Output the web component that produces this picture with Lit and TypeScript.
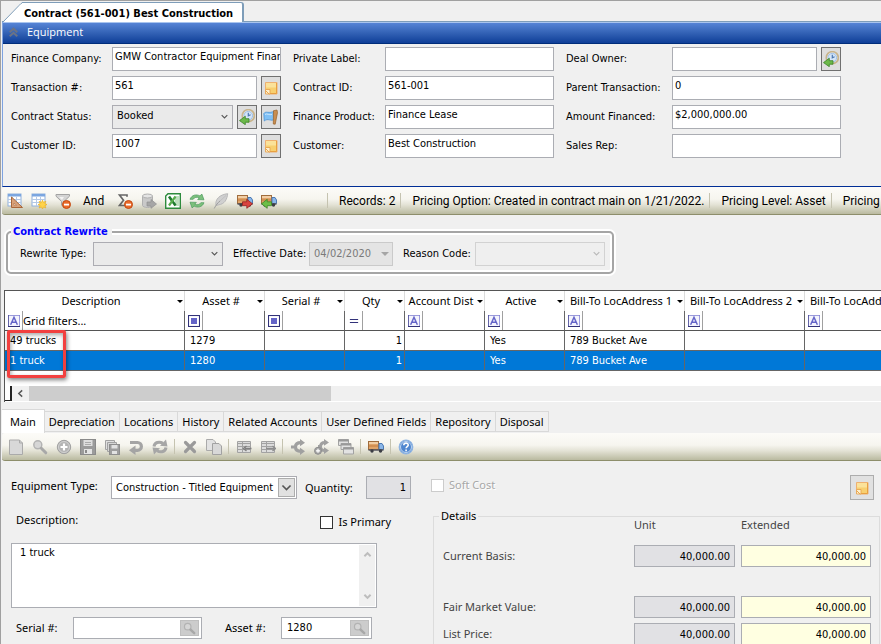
import { LitElement, html, css, svg, nothing, TemplateResult, SVGTemplateResult } from "lit";
import { customElement, property } from "lit/decorators.js";
import { classMap } from "lit/directives/class-map.js";

/* ---------- icons, all drawn on a 16 x 16 field ---------- */

const sheet = svg`
  <rect x="1" y="1" width="13" height="12" fill="#fff" stroke="#8fb0dc"/>
  <rect x="1" y="1" width="13" height="2.500" fill="#7ba6e0"/>
  <path d="M1 6.500h13M1 9.500h13M5.500 4v9M9.500 4v9" stroke="#b4c9e6" fill="none"/>`;

const minusBadge = svg`
  <circle cx="11.5" cy="11.5" r="4" fill="#ea6a2a" stroke="#c24a12"/>
  <rect x="9" y="10.7" width="5" height="1.8" fill="#fff"/>`;

const lorry = svg`
  <rect x="0.5" y="2.5" width="10" height="8" fill="#e0a468" stroke="#a06c3c"/>
  <path d="M1 4h9" stroke="#f8dcb8" stroke-width="1.4"/>
  <path d="M1 7h9" stroke="#c47a3c"/>
  <path d="M11 4.5h3l1.5 2.5v3.500H11z" fill="#8ab6e8" stroke="#4c7ab4"/>
  <path d="M0.500 11h15" stroke="#55555c" stroke-width="1.6"/>
  <circle cx="4" cy="12" r="1.7" fill="#3c3d44"/><circle cx="12.500" cy="12" r="1.7" fill="#3c3d44"/>`;

const grey = "#a2a2a2";
const greyTable = svg`
  <path d="M1.500 2.500h13v11h-13z" fill="#dcdcdc" stroke="${grey}"/>
  <path d="M2 4.500h12M2 7.500h12M2 10.500h12M6.500 3v10" stroke="${grey}"/>`;

const icons: Record<string, SVGTemplateResult> = {
  design: svg`${sheet}<path d="M4.500 4v10.500h11z" fill="#d9a27a" stroke="#a9673b"/><path d="M7 10v2.200h2.500z" fill="#fff" stroke="#a9673b" stroke-width=".6"/>`,
  layoutNew: svg`${sheet}<path d="M11.500 7l1 2.300 2.400-1-1 2.300 2.100 1-2.100 1 1 2.400-2.400-1-1 2-1-2-2.400 1 1-2.400-2.100-1 2.100-1-1-2.300 2.400 1z" fill="#ffd34a" stroke="#e9ac1c" stroke-width=".6"/>`,
  filterOff: svg`<path d="M1 1.500h13.500v1.700L9 8.500V14l-2.500-1.800V8.500L1 3.200z" fill="#d4d4d4" stroke="#a3a3a3"/><path d="M4 4h5l-2 3z" fill="#f3f3f3"/>${minusBadge}`,
  sumOff: svg`<path d="M10 3.700V2H2.500l4 5.200-4 5.300H8" fill="none" stroke="#666" stroke-width="1.700"/>${minusBadge}`,
  dbExport: svg`<path d="M1.500 3v9.500c0 1 2.500 2 5 2s5-1 5-2V3z" fill="#c9c9c9" stroke="#b0b0b0"/><ellipse cx="6.500" cy="3" rx="5" ry="2" fill="#e4e4e4" stroke="#b0b0b0"/><path d="M6 9h4V6.500l5.500 4.500-5.500 4.300V13H6z" fill="#a6a6a6" stroke="#8f8f8f" stroke-width=".7"/>`,
  excel: svg`<path d="M3 .7h12.300v14.600H.7V3z" fill="#fff" stroke="#2e8b3d" stroke-width="1.400"/><rect x="10" y="3" width="4" height="10" fill="#bfe0bf"/><path d="M4 3.500l6.500 9" stroke="#1f7a2e" stroke-width="2.600"/><path d="M10.500 3.500L4 12.500" stroke="#58ab4c" stroke-width="2.200"/>`,
  refresh: svg`<path d="M1 6.300C2.500 2 7.500 .8 11 3L12.800 1l2.200 5.800-6.300-.2 1.500-1.700C8 3.700 5.300 4.200 4.200 6.300z" fill="#7cc07c" stroke="#4a9a5c" stroke-width=".7"/><path d="M15 9.700C13.500 14 8.500 15.200 5 13L3.200 15 1 9.200l6.300.2-1.500 1.700c2.200 1.200 4.900.7 6-1.400z" fill="#7cc07c" stroke="#4a9a5c" stroke-width=".7"/>`,
  feather: svg`<path d="M3 12.500C1.800 6 7 1.500 14.700.7 14 6.500 12 11 5 12z" fill="#d0d0d0" stroke="#b8b8b8"/><path d="M1.200 15.500C3 12 5 9.500 7 8" stroke="#9d9d9d" fill="none"/><path d="M7 8l6-5.500" stroke="#c0c0c0" fill="none"/>`,
  truckOut: svg`${lorry}<path d="M5.500 8.800h4.300V6.300l5.700 4.500-5.700 4.500v-2.600H5.500z" fill="#d94440" stroke="#93201f" stroke-width=".8"/>`,
  truckIn: svg`${lorry}<path d="M10.500 8.800H6.200V6.300L.500 10.800l5.700 4.500v-2.600h4.300z" fill="#6cbf47" stroke="#3b8427" stroke-width=".8"/>`,
  truck: svg`${lorry}`,
  note: svg`<path d="M2.500 2.500h11.500v11.500H6L2.500 10.500z" fill="#f8d070" stroke="#eeb070"/><path d="M3 3h10.500v4.500H3z" fill="#fbe29a"/><path d="M13.500 3v10.500H7" fill="none" stroke="#e8a040"/><path d="M2.500 9.500h4.500V14H2.500z" fill="#fff0cc" stroke="#e8a550" stroke-width=".9"/><path d="M2.500 10.500L6 14" stroke="#e8a550"/>`,
  clock: svg`<circle cx="9.300" cy="6.700" r="6" fill="#e8f1fb" stroke="#c8b48c" stroke-width="1.800"/><circle cx="9.300" cy="6.700" r="4.300" fill="#d4e5f8" stroke="#8db2de" stroke-width=".8"/><path d="M9.300 3.800v3l2.300-1" stroke="#4c77ae" fill="none" stroke-width="1.200"/><path d="M10 9.700H6.300V7.200L.500 11.600l5.800 4.100v-2.500H10z" fill="#6cb94a" stroke="#3b8427" stroke-width=".8"/>`,
  flag: svg`<path d="M.800 4.500C3 1.500 6 5 11 2.200l.500 8C8 13 5 8.500 1.300 12z" fill="#7fc0f5" stroke="#4b93d4" stroke-width=".8"/><path d="M2 5.500c2-1.500 4 1 7 0" stroke="#c9e6fc" fill="none"/><path d="M10.500 1.700l3.500-.7.500 2.700-2.300 11.500-1.900-.2z" fill="#c98d4f" stroke="#966129" stroke-width=".7"/>`,
  page: svg`<path d="M1.500 1h10L14.500 4v11.500h-13z" fill="#d8d8d8" stroke="#aaa"/><path d="M11.500 1v3h3" fill="none" stroke="#aaa"/>`,
  search: svg`<circle cx="5.800" cy="5.800" r="4" fill="#d6d6d6" stroke="#b3b3b3" stroke-width="1.500"/><path d="M9.300 9.300l4.500 4.500" stroke="#a8a8a8" stroke-width="3" stroke-linecap="round"/>`,
  add: svg`<circle cx="8" cy="8" r="6.700" fill="#b4b4b4" stroke="#a0a0a0"/><circle cx="8" cy="8" r="5.500" fill="none" stroke="#d2d2d2"/><path d="M8 4.500v7M4.500 8h7" stroke="#fff" stroke-width="2.200"/>`,
  save: svg`<rect x=".500" y=".500" width="15" height="15" fill="#9b9b9b" stroke="#8a8a8a"/><rect x="3.500" y="1" width="9" height="6" fill="#dedede"/><path d="M5 3.500h6M5 5.500h6" stroke="#aaa"/><rect x="4" y="10" width="8" height="5" fill="#e4e4e4"/><rect x="5" y="11" width="2" height="3" fill="#8a8a8a"/>`,
  saveAll: svg`<path d="M1.500 1.500h9v9h-9z" fill="#e0e0e0" stroke="${grey}"/><path d="M3.500 3.500h9v9h-9z" fill="#d5d5d5" stroke="${grey}"/><rect x="5.500" y="5.500" width="10" height="10" fill="#9e9e9e" stroke="#8e8e8e"/><rect x="7.500" y="6" width="6" height="3.500" fill="#e2e2e2"/><rect x="8" y="12" width="5" height="3" fill="#e2e2e2"/>`,
  undo: svg`<path d="M2 3.500h7.500a3.900 3.900 0 0 1 0 7.800H6.500" fill="none" stroke="#a4a4a4" stroke-width="3.200"/><path d="M7.500 6.500v9.500L1 11.300z" fill="#a4a4a4"/>`,
  redoAll: svg`<path d="M2 7.500C2.500 3.500 7 2 11 4.300" fill="none" stroke="#a6a6a6" stroke-width="3"/><path d="M14 .5l1.500 7-7.500-.7z" fill="#a6a6a6"/><path d="M14 8.500c-.5 4-5 5.500-9 3.200" fill="none" stroke="#a6a6a6" stroke-width="3"/><path d="M2 15.500l-1.500-7 7.500.7z" fill="#a6a6a6"/>`,
  remove: svg`<path d="M3.500 3.500l9 9M12.500 3.500l-9 9" stroke="#9a9a9a" stroke-width="3.200" stroke-linecap="round"/>`,
  copy: svg`<path d="M.500.500h6.500l2.500 2.500v8.500h-9z" fill="#e2e2e2" stroke="#aaa"/><path d="M6.500 4.500H13l2.500 2.500v8.500h-9z" fill="#d8d8d8" stroke="#a2a2a2"/>`,
  rowIn: svg`${greyTable}<path d="M15.500 9.500H9M10.500 7L7.500 9.500l3 2.500" stroke="#808080" fill="none" stroke-width="1.400"/>`,
  rowOut: svg`${greyTable}<path d="M6 9.500h8M12.500 7l3 2.500-3 2.500" stroke="#8c8c8c" fill="none" stroke-width="1.400"/>`,
  split: svg`<path d="M1 8h5M5.500 8c0-3 2-4.300 5.500-4.300M5.500 8c0 3 2 4.300 5.500 4.300" fill="none" stroke="#a0a0a0" stroke-width="3.200"/><path d="M10 0l5 3.700L10 7.300zM10 8.700l5 3.600-5 3.700z" fill="#a0a0a0"/>`,
  splitAdd: svg`<path d="M4 7.500h3M6.500 7.500c0-3 1.500-4.100 4.500-4.100M6.500 7.500c0 3 1.500 4.100 4.500 4.100" fill="none" stroke="#a0a0a0" stroke-width="3"/><path d="M10 0l5 3.400-5 3.400zM10 8.200l5 3.400-5 3.400z" fill="#a0a0a0"/><circle cx="4" cy="11.800" r="3.500" fill="#a5a5a5" stroke="#8d8d8d"/><path d="M4 9.800v4M2 11.800h4" stroke="#fff" stroke-width="1.200"/>`,
  cascade: svg`<path d="M.500.500h10v6h-10z" fill="#e2e2e2" stroke="${grey}"/><path d="M3 4.500h10v6H3z" fill="#e2e2e2" stroke="${grey}"/><path d="M5.500 8.500h10v6.500h-10z" fill="#e2e2e2" stroke="${grey}"/><path d="M.500 1.500h10M3 5.500h10M5.500 9.500h10" stroke="#999" stroke-width="1.800"/>`,
  help: svg`<circle cx="8" cy="8" r="6.800" fill="#4f86cf" stroke="#8fb4e2" stroke-width="1.200"/><circle cx="8" cy="8" r="5.500" fill="none" stroke="#dbe8f7" stroke-width=".8"/><path d="M5.800 6.300c0-3 4.600-2.800 4.400-.2-.1 1.500-2.100 1.500-2.100 3.200M8.100 10.600v1.700" fill="none" stroke="#fff" stroke-width="1.600"/>`,
  collapse: svg`<path d="M2.500 7.500L8 2.500l5.500 5M2.500 13.500L8 8.500l5.500 5" fill="none" stroke="#6b7385" stroke-width="3"/>`,
  textMode: svg`<rect x=".500" y=".500" width="15" height="15" fill="#f4f4fd" stroke="#7d7dd0"/><path d="M0 0v15.500h16" fill="none" stroke="#32327a" stroke-width="1.400"/><path d="M3.500 13L8 3l4.500 10M5.200 9.700h5.600" fill="none" stroke="#6464c8" stroke-width="2"/>`,
  valueMode: svg`<rect x=".700" y=".700" width="14.600" height="14.600" fill="#fff" stroke="#32327a" stroke-width="1.400"/><rect x="4" y="4" width="8" height="8" fill="#6464c8"/>`,
  equalMode: svg`<path d="M2.500 6h11M2.500 10h11" stroke="#32327a" stroke-width="1.400"/>`,
  chevron: svg`<path d="M3 5.500L8 10.500l5-5" fill="none" stroke="currentColor" stroke-width="2"/>`,
  chevronUp: svg`<path d="M2.500 11L8 5.500l5.500 5.500" fill="none" stroke="currentColor" stroke-width="3.600"/>`,
  chevronDown: svg`<path d="M2.500 5L8 10.500 13.500 5" fill="none" stroke="currentColor" stroke-width="3.600"/>`,
  chevronLeft: svg`<path d="M11 2.500L5 8l6 5.500" fill="none" stroke="currentColor" stroke-width="2.600"/>`,
};

const icon = (name: string, size = 16): TemplateResult => html`
  <svg viewBox="0 0 16 16" width=${size} height=${size} aria-hidden="true">${icons[name]}</svg>`;

const base = css`
  * { box-sizing: border-box; }
  svg { display: block; flex: none; }
  button, input, select, textarea { font: inherit; color: inherit; margin: 0; border-radius: 0; outline: none; }
  button { padding: 0; }
  .tool { display: flex; align-items: center; justify-content: center; border: 0; background: none; width: 16px; height: 16px; flex: none; }
  .bar {
    display: flex; align-items: center; flex: none; height: 28px; overflow: hidden; white-space: nowrap;
    background: linear-gradient(#fcfbf8, #f6f5ef 45%, #e4e3d6 65%, #babaa0);
    border-bottom: 1px solid #8d8e6b; border-radius: 3px 0 0 3px;
  }
  .sep { width: 1px; height: 15px; background: #c5c3b0; flex: none; }
`;

/* ---------- drop-down ---------- */

@customElement("drop-down")
class DropDown extends LitElement {
  @property() label = "";
  @property() value = "";
  @property() kind = "plain";
  @property({ type: Boolean }) disabled = false;

  static styles = [base, css`
    :host { display: block; position: relative; min-width: 0; }
    select {
      appearance: none; display: block; width: 100%; height: 24px; padding: 0 20px 2px 4px;
      border: 1px solid #acacb2; background: #e5e5e5; color: #000; opacity: 1; font-family: var(--main);
    }
    .plain { background: #eaeaea; }
    .off { border-color: #d2d2d2; background: #efefef; color: #7a7a7a; }
    .white { background: #fff; height: 23px; padding-bottom: 0; padding-right: 18px; }
    .date { background: #e4e4e4; border-color: #cacaca; color: #7a7a7a; padding-bottom: 0; }
    .mark { position: absolute; right: 4px; top: 7px; pointer-events: none; color: #555; }
    .mark.pale { color: #b9b9b9; }
    .mark.boxed {
      right: 2px; top: 2px; width: 17px; height: 19px; display: flex; align-items: center; justify-content: center;
      background: #e1e1e1; border: 1px solid #adadad;
    }
    .mark.solid { top: 10px; border: 4px solid transparent; border-top-color: #a5a5a5; border-bottom: 0; }
  `];

  render() {
    const k = this.kind;
    const marks = { mark: true, pale: this.disabled, boxed: k === "white", solid: k === "date" };
    return html`
      <select class=${classMap({ [k]: true, off: this.disabled && k === "plain" })}
        aria-label=${this.label} ?disabled=${this.disabled}>
        <option>${this.value}</option>
      </select>
      <span class=${classMap(marks)}>${k === "date" ? nothing : icon("chevron", k === "white" ? 13 : 9)}</span>`;
  }
}

/* ---------- equipment header panel ---------- */

interface Field {
  id: string;
  label: string;
  value: string;
  select?: boolean;
  buttons?: string[];
}

const headerFields: Field[] = [
  { id: "finance-company", label: "Finance Company:", value: "GMW Contractor Equipment Finan" },
  { id: "private-label", label: "Private Label:", value: "" },
  { id: "deal-owner", label: "Deal Owner:", value: "", buttons: ["clock"] },
  { id: "transaction", label: "Transaction #:", value: "561", buttons: ["note"] },
  { id: "contract-id", label: "Contract ID:", value: "561-001" },
  { id: "parent", label: "Parent Transaction:", value: "0" },
  { id: "status", label: "Contract Status:", value: "Booked", select: true, buttons: ["clock", "flag"] },
  { id: "product", label: "Finance Product:", value: "Finance Lease" },
  { id: "amount", label: "Amount Financed:", value: "$2,000,000.00" },
  { id: "customer-id", label: "Customer ID:", value: "1007", buttons: ["note"] },
  { id: "customer", label: "Customer:", value: "Best Construction" },
  { id: "sales-rep", label: "Sales Rep:", value: "" },
];

@customElement("equipment-panel")
class EquipmentPanel extends LitElement {
  static styles = [base, css`
    :host { display: block; flex: none; }
    .panel { border-left: 1px solid #7da2e0; border-bottom: 1px solid #002d96; height: 165px; }
    .title {
      display: flex; align-items: center; gap: 8px; height: 22px; padding: 0 5px 2px; margin: 0;
      color: #fff; font: 400 11px/16px var(--soft);
      background: linear-gradient(#5684d6, #3665b8 45%, #0f3f98); border-top: 1px solid #a9c4ee; border-bottom: 1px solid #002d7a;
    }
    .fields {
      display: grid; grid-template-columns: 101px 1fr 104px 1fr 118px 1fr; row-gap: 5px;
      padding: 3px 40px 0 8px; align-items: center;
    }
    label { white-space: nowrap; }
    .second { padding-left: 12px; }
    .cell { display: flex; gap: 4px; min-width: 0; }
    input { flex: 1; min-width: 0; width: 0; height: 24px; border: 1px solid #abadb3; background: #fff; padding: 0 0 6px 2px; }
    drop-down { flex: 1; }
    .side {
      flex: none; width: 20px; height: 24px; display: flex; align-items: center; justify-content: center;
      border: 1px solid #707070; background: #dedede;
    }
  `];

  render() {
    return html`
      <section class="panel">
        <h2 class="title">${icon("collapse", 11)}Equipment</h2>
        <div class="fields">
          ${headerFields.map((f, i) => html`
            <label class=${i % 3 ? "second" : ""} for=${f.id}>${f.label}</label>
            <div class="cell">
              ${f.select
                ? html`<drop-down id=${f.id} label=${f.label} .value=${f.value}></drop-down>`
                : html`<input id=${f.id} .value=${f.value}>`}
              ${(f.buttons ?? []).map((b) => html`<button class="side" aria-label="${f.label} ${b}">${icon(b)}</button>`)}
            </div>`)}
        </div>
      </section>`;
  }
}

/* ---------- asset grid ---------- */

interface Column {
  name: string;
  width: number;
  mode: string;
  numeric?: boolean;
}

const columns: Column[] = [
  { name: "Description", width: 180, mode: "textMode" },
  { name: "Asset #", width: 80, mode: "valueMode" },
  { name: "Serial #", width: 80, mode: "valueMode" },
  { name: "Qty", width: 60, mode: "equalMode", numeric: true },
  { name: "Account Dist", width: 80, mode: "textMode" },
  { name: "Active", width: 80, mode: "textMode" },
  { name: "Bill-To LocAddress 1", width: 120, mode: "textMode" },
  { name: "Bill-To LocAddress 2", width: 120, mode: "textMode" },
  { name: "Bill-To LocAddress 3", width: 120, mode: "textMode" },
];

const rows = [
  ["49 trucks", "1279", "", "1", "", "Yes", "789 Bucket Ave", "", ""],
  ["1 truck", "1280", "", "1", "", "Yes", "789 Bucket Ave", "", ""],
];

@customElement("asset-grid")
class AssetGrid extends LitElement {
  static styles = [base, css`
    :host { display: block; position: relative; margin: 16px 0 0 2px; flex: none; background: #fff; border: 1px solid #555; border-right: 0; border-bottom: 0; }
    .view { overflow: hidden; height: 95px; }
    table { table-layout: fixed; width: 920px; border-collapse: separate; border-spacing: 0; }
    th, td { height: 20px; padding: 0; font-weight: 400; overflow: hidden; white-space: nowrap; }
    thead { font-family: var(--wide); }
    .name { border-right: 1px solid #dcdcdc; }
    .head { display: flex; align-items: center; }
    .head span { flex: 1; display: flex; justify-content: center; min-width: 0; }
    .head i { flex: none; border: 3px solid transparent; border-top-color: #000; border-bottom: 0; margin-right: 1px; }
    .filter { border-right: 1px solid #666; border-bottom: 1px solid #555; }
    .box { display: flex; align-items: center; height: 19px; padding-left: 3px; }
    .box input { flex: 1; min-width: 0; width: 0; height: 19px; border: 0; border-left: 1px solid #a0a0a0; margin-left: 2px; padding: 0; background: none; }
    .data { border-right: 1px solid #666; border-bottom: 1px solid #666; padding: 0 5px; }
    .num { text-align: right; padding-right: 2px; }
    .picked { background: #0078d7; color: #fff; }
    .scroll { display: flex; align-items: stretch; height: 16px; background: #f0f0f0; border-bottom: 1px solid #fff; }
    .grip { width: 7px; background: #fff; border-right: 2px solid #222; border-bottom: 1px solid #222; }
    .left { width: 17px; border: 0; background: none; display: flex; align-items: center; justify-content: center; color: #555; }
    .thumb { width: 302px; background: #cdcdcd; }
    .callout {
      position: absolute; left: 2px; top: 39px; width: 59px; height: 48px; pointer-events: none;
      border: 3px solid #f2403f; border-radius: 2px; box-shadow: 1px 2px 4px rgba(0, 0, 0, .5), inset 1px 2px 4px rgba(0, 0, 0, .35);
    }
  `];

  render() {
    return html`
      <div class="view">
        <table>
          <colgroup>${columns.map((c) => html`<col style="width:${c.width}px">`)}</colgroup>
          <thead>
            <tr>${columns.map((c) => html`<th class="name" scope="col"><div class="head"><span>${c.name}</span><i></i></div></th>`)}</tr>
            <tr>${columns.map((c, i) => html`
              <td class="filter"><div class="box">${icon(c.mode, 12)}<input aria-label="Filter ${c.name}" .value=${i ? "" : "Grid filters..."}></div></td>`)}</tr>
          </thead>
          <tbody>
            ${rows.map((r, n) => html`
              <tr class=${n === 1 ? "picked" : ""}>${r.map((v, i) => html`<td class=${classMap({ data: true, num: !!columns[i].numeric })}>${v}</td>`)}</tr>`)}
          </tbody>
        </table>
      </div>
      <div class="scroll">
        <div class="grip"></div>
        <button class="left" aria-label="Scroll left">${icon("chevronLeft", 9)}</button>
        <div class="thumb"></div>
      </div>
      <div class="callout"></div>`;
  }
}

/* ---------- page ---------- */

const tabs = ["Main", "Depreciation", "Locations", "History", "Related Accounts", "User Defined Fields", "Repository", "Disposal"];

const formTools = [
  ["page", "search", "add", "save", "saveAll", "undo", "redoAll"],
  ["remove", "copy"],
  ["rowIn", "rowOut"],
  ["split", "splitAdd", "cascade"],
  ["truck"],
  ["help"],
];

const amounts = [
  { id: "basis", label: "Current Basis:" },
  { id: "fair", label: "Fair Market Value:" },
  { id: "list", label: "List Price:" },
];

@customElement("app-root")
class AppRoot extends LitElement {
  static styles = [base, css`
    :host {
      --main: "DejaVu Sans Condensed", "DejaVu Sans", sans-serif;
      --wide: "Noto Sans", "Open Sans", sans-serif;
      --soft: "Open Sans", "Noto Sans", sans-serif;
      display: flex; flex-direction: column; height: 100vh; overflow: hidden; box-sizing: border-box;
      padding-left: 1px; background: #f0f0f0; color: #000; font: 11px/16px var(--main);
      border-left: 1px solid #a0a0a0; border-top: 1px solid #a0a0a0;
    }
    .docs { display: flex; align-items: flex-end; height: 21px; flex: none; border-bottom: 1px solid #7e9db9; }
    .doc { display: flex; height: 20px; margin-bottom: -1px; border: 0; background: none; }
    .slope { margin-right: -1px; }
    .caption {
      display: flex; align-items: center; height: 20px; padding: 2px 9px 0 2px; font-weight: 700; white-space: nowrap;
      background: #fff; border: 1px solid #7e9db9; border-width: 1px 2px 0 0; border-radius: 0 3px 0 0;
    }
    .tools { padding-left: 5px; gap: 8px; font: 12px/16px Roboto, var(--soft); }
    .and { flex: none; width: 30px; padding-left: 4px; text-align: left; border: 0; background: none; }
    .tools .gap { width: 34px; flex: none; }
    .note { flex: none; padding-left: 3px; }
    .note + .sep { margin-left: -3px; }
    fieldset { margin: 0; min-width: 0; }
    .rewrite {
      flex: none; align-self: flex-start; margin: 9px 0 0 4px; padding: 2px 7px 6px 12px;
      border: 2px solid #a5a5a5; border-radius: 5px; box-shadow: 0 0 0 2px #fff, inset 0 0 0 2px #fff;
    }
    .rewrite legend { margin-left: -9px; padding: 0 4px 0 2px; font-weight: 700; color: #00f; background: #f0f0f0; }
    .line { display: flex; align-items: center; white-space: nowrap; }
    .rewrite drop-down { width: 130px; }
    .rewrite .date { width: 84px; }
    .rewrite label { width: 73px; }
    .rewrite .wide { width: 86px; padding-left: 10px; }
    .rewrite .mid { width: 82px; padding-left: 10px; }
    .tabs { display: flex; align-items: flex-end; flex: none; margin-top: 7px; height: 24px; font-family: var(--wide); }
    .tab { height: 21px; padding: 0 4px; border: 1px solid #d9d9d9; border-left: 0; background: #f0f0f0; white-space: nowrap; margin-bottom: 1px; }
    .tab.on { height: 24px; padding: 0 8px; background: #fff; margin: 0; border-bottom: 0; }
    .form-tools { gap: 8px; padding-left: 6px; }
    .form-tools .sep { margin: 0 -1px 0 -2px; }
    .form { display: grid; grid-template-columns: 431px 1fr; flex: 1; min-height: 0; overflow: hidden; font-family: var(--wide); }
    .left { padding: 15px 54px 0 9px; display: flex; flex-direction: column; }
    .type { width: 186px; }
    .top { width: 400px; }
    .top label { width: 100px; }
    .top .qty { width: 69px; padding-left: 8px; }
    .left .raised { padding-bottom: 4px; }
    .box { height: 23px; border: 1px solid #abadb3; background: #e1e1e4; text-align: right; padding: 0 4px; min-width: 0; font-family: var(--main); }
    .qty-box { width: 45px; }
    .desc { justify-content: space-between; height: 26px; margin-top: 10px; padding-left: 5px; }
    .desc .tick { margin-right: -12px; }
    .tick { display: flex; align-items: center; gap: 5px; white-space: nowrap; }
    .tick input { appearance: none; width: 13px; height: 13px; border: 1px solid #333; background: #fff; }
    .tick.off { color: #a8a8a8; text-shadow: 1px 1px #fff; }
    .tick.off input { border-color: #ccc; }
    .memo { display: flex; width: 366px; height: 65px; margin-top: 8px; border: 1px solid #abadb3; background: #fff; padding: 1px; }
    .memo textarea { flex: 1; min-width: 0; border: 0; resize: none; padding: 0 7px; background: none; overflow: hidden; font-family: var(--main); }
    .rail { width: 16px; background: #f0f0f0; color: #bdbdbd; display: flex; flex-direction: column; justify-content: space-between; align-items: center; padding: 5px 0; }
    .keys { margin-top: 9px; padding-left: 5px; }
    .keys label { width: 57px; }
    .look { display: flex; align-items: center; width: 129px; height: 22px; border: 1px solid #abadb3; background: #fff; padding: 2px; font-family: var(--main); }
    .look input { flex: 1; width: 0; min-width: 0; border: 0; background: none; padding: 0 3px; }
    .look button { width: 19px; height: 16px; display: flex; align-items: center; justify-content: center; border: 1px solid #bfbfbf; background: #ccc; }
    .keys .asset { width: 79px; padding-left: 23px; }
    .look.short { width: 91px; }
    .right { padding: 14px 0 0; display: flex; flex-direction: column; min-width: 0; }
    .above { display: flex; align-items: flex-start; justify-content: space-between; padding: 0 7px 0 0; height: 33px; }
    .above .tick { margin: 2px 0 0 -2px; }
    .memo-button { width: 24px; height: 25px; display: flex; align-items: center; justify-content: center; border: 1px solid #adadad; background: #e1e1e1; }
    .details { border: 1px solid #dcdcdc; padding: 1px 8px 0 9px; color: #444; margin-right: 1px; }
    .details legend { color: #000; padding: 0 2px; margin-left: -4px; }
    .grid { display: grid; grid-template-columns: 1fr 101px 130px; column-gap: 6px; row-gap: 5px; align-items: center; margin-top: -8px; }
    .grid .box { height: 22px; width: 100%; color: #000; }
    .grid .ext { background: #ffffe1; }
    .grid .first { margin-bottom: 24px; }
    .grid .head { margin-bottom: 7px; }
  `];

  render() {
    return html`
      <nav class="docs">
        <button class="doc">
          <svg class="slope" viewBox="0 0 21 20" width="21" height="20" aria-hidden="true">
            <path d="M1 20.500L17 3.500Q19 1 21 .500V20.500z" fill="#fff"/>
            <path d="M1 20L17 3.500Q19 1 21 .500" fill="none" stroke="#7e9db9"/>
          </svg>
          <span class="caption">Contract (561-001) Best Construction</span>
        </button>
      </nav>
      <equipment-panel></equipment-panel>

      <div class="bar tools">
        ${["design", "layoutNew", "filterOff"].map((n) => html`<button class="tool" aria-label=${n}>${icon(n)}</button>`)}
        <button class="and">And</button>
        ${["sumOff", "dbExport", "excel", "refresh", "feather", "truckOut", "truckIn"].map((n) => html`<button class="tool" aria-label=${n}>${icon(n)}</button>`)}
        <span class="gap"></span>
        ${["Records: 2", "Pricing Option: Created in contract main on 1/21/2022.", "Pricing Level: Asset", "Pricing Method: Rate"].map(
          (t) => html`<span class="sep"></span><span class="note">${t}</span>`)}
      </div>

      <fieldset class="rewrite">
        <legend>Contract Rewrite</legend>
        <div class="line">
          <label for="rewrite-type">Rewrite Type:</label>
          <drop-down id="rewrite-type" label="Rewrite Type"></drop-down>
          <label class="wide" for="effective">Effective Date:</label>
          <drop-down class="date" id="effective" label="Effective Date" kind="date" value="04/02/2020" disabled></drop-down>
          <label class="mid" for="reason">Reason Code:</label>
          <drop-down id="reason" label="Reason Code" disabled></drop-down>
        </div>
      </fieldset>

      <asset-grid></asset-grid>

      <nav class="tabs">${tabs.map((t, i) => html`<button class=${classMap({ tab: true, on: i === 0 })}>${t}</button>`)}</nav>
      <div class="bar form-tools">
        ${formTools.map((group, i) => html`
          ${i ? html`<span class="sep"></span>` : nothing}
          ${group.map((n) => html`<button class="tool" aria-label=${n}>${icon(n)}</button>`)}`)}
      </div>

      <div class="form">
        <div class="left">
          <div class="line top">
            <label class="raised" for="type">Equipment Type:</label>
            <drop-down class="type" id="type" label="Equipment Type" kind="white" value="Construction - Titled Equipment"></drop-down>
            <label class="qty" for="qty">Quantity:</label>
            <input class="box qty-box" id="qty" .value=${"1"}>
          </div>
          <div class="line desc">
            <label class="raised" for="desc">Description:</label>
            <label class="tick"><input type="checkbox">Is Primary</label>
          </div>
          <div class="memo">
            <textarea id="desc" .value=${"1 truck"}></textarea>
            <div class="rail">${icon("chevronUp", 9)}${icon("chevronDown", 9)}</div>
          </div>
          <div class="line keys">
            <label for="serial">Serial #:</label>
            <span class="look"><input id="serial"><button aria-label="Find serial">${icon("search", 13)}</button></span>
            <label class="asset" for="asset">Asset #:</label>
            <span class="look short"><input id="asset" .value=${"1280"}><button aria-label="Find asset">${icon("search", 13)}</button></span>
          </div>
        </div>
        <div class="right">
          <div class="above">
            <label class="tick off"><input type="checkbox" disabled>Soft Cost</label>
            <button class="memo-button" aria-label="Notes">${icon("note")}</button>
          </div>
          <fieldset class="details">
            <legend>Details</legend>
            <div class="grid">
              <span></span><span class="head">Unit</span><span class="head">Extended</span>
              ${amounts.map((a, i) => {
                const cls = i ? "" : " first";
                return html`
                  <label class=${cls} for=${a.id}>${a.label}</label>
                  <input class="box${cls}" id=${a.id} .value=${"40,000.00"}>
                  <input class="box ext${cls}" aria-label="${a.label} extended" .value=${"40,000.00"}>`;
              })}
            </div>
          </fieldset>
        </div>
      </div>`;
  }
}
